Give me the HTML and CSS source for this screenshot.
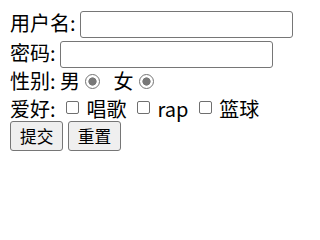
FILE: index.html
```html
<!DOCTYPE html>
<html lang="zh">
<head>
<meta charset="utf-8">
<link rel="stylesheet" href="styles.css">
</head>
<body>
<form class="form">
  <div class="row row-user">用户名: <input class="field field-user" type="text"></div>
  <div class="row row-pass">密码: <input class="field field-pass" type="password"></div>
  <div class="row row-sex">性别: 男<input class="radio" type="radio" name="sex1" checked> 女<input class="radio" type="radio" name="sex2" checked></div>
  <div class="row row-hobby">爱好: <input class="check" type="checkbox"> 唱歌 <input class="check" type="checkbox"> rap <input class="check" type="checkbox"> 篮球</div>
  <div class="row row-btns"><input class="btn" type="submit" value="提交"> <input class="btn" type="reset" value="重置"></div>
</form>
</body>
</html>
```
FILE: styles.css
```css
body {
  margin: 10px;
  font-family: "Noto Sans CJK SC", "Noto Sans", sans-serif;
  font-size: 20px;
  color: #000;
  background: #fff;
}
.form {
  margin: 0;
}
.row {
  line-height: 25px;
  white-space: nowrap;
}
.row-user { height: 30px; }
.row-pass { height: 28px; }
.row-sex { height: 28px; }
.row-hobby { height: 25px; }
.row-btns { height: 30px; }
.field {
  box-sizing: border-box;
  width: 213px;
  height: 27px;
  margin: 1px 0 0;
  padding: 1px 3px;
  border: 1px solid #767676;
  border-radius: 3px;
  background: #fff;
  font-family: "Noto Sans CJK SC", sans-serif;
  font-size: 16.67px;
  vertical-align: top;
}
.btn {
  box-sizing: border-box;
  height: 30px;
  margin: 0;
  padding: 0 9px;
  border: 1px solid #767676;
  border-radius: 3px;
  background: #efefef;
  font-family: "Noto Sans CJK SC", sans-serif;
  font-size: 16.67px;
  line-height: 26px;
  color: #000;
  vertical-align: top;
}
.radio {
  appearance: none;
  -webkit-appearance: none;
  box-sizing: border-box;
  width: 15px;
  height: 15px;
  margin: 0 9px 0 5px;
  border: 1.5px solid #747474;
  border-radius: 50%;
  background: radial-gradient(circle, #787878 0 3.8px, #fff 4.4px);
  vertical-align: 0;
}
.check {
  appearance: none;
  -webkit-appearance: none;
  box-sizing: border-box;
  width: 13px;
  height: 13px;
  margin: 0 3px 0 6px;
  border: 1px solid #6f6f6f;
  border-radius: 2px;
  background: #fff;
  vertical-align: 3px;
}
```
